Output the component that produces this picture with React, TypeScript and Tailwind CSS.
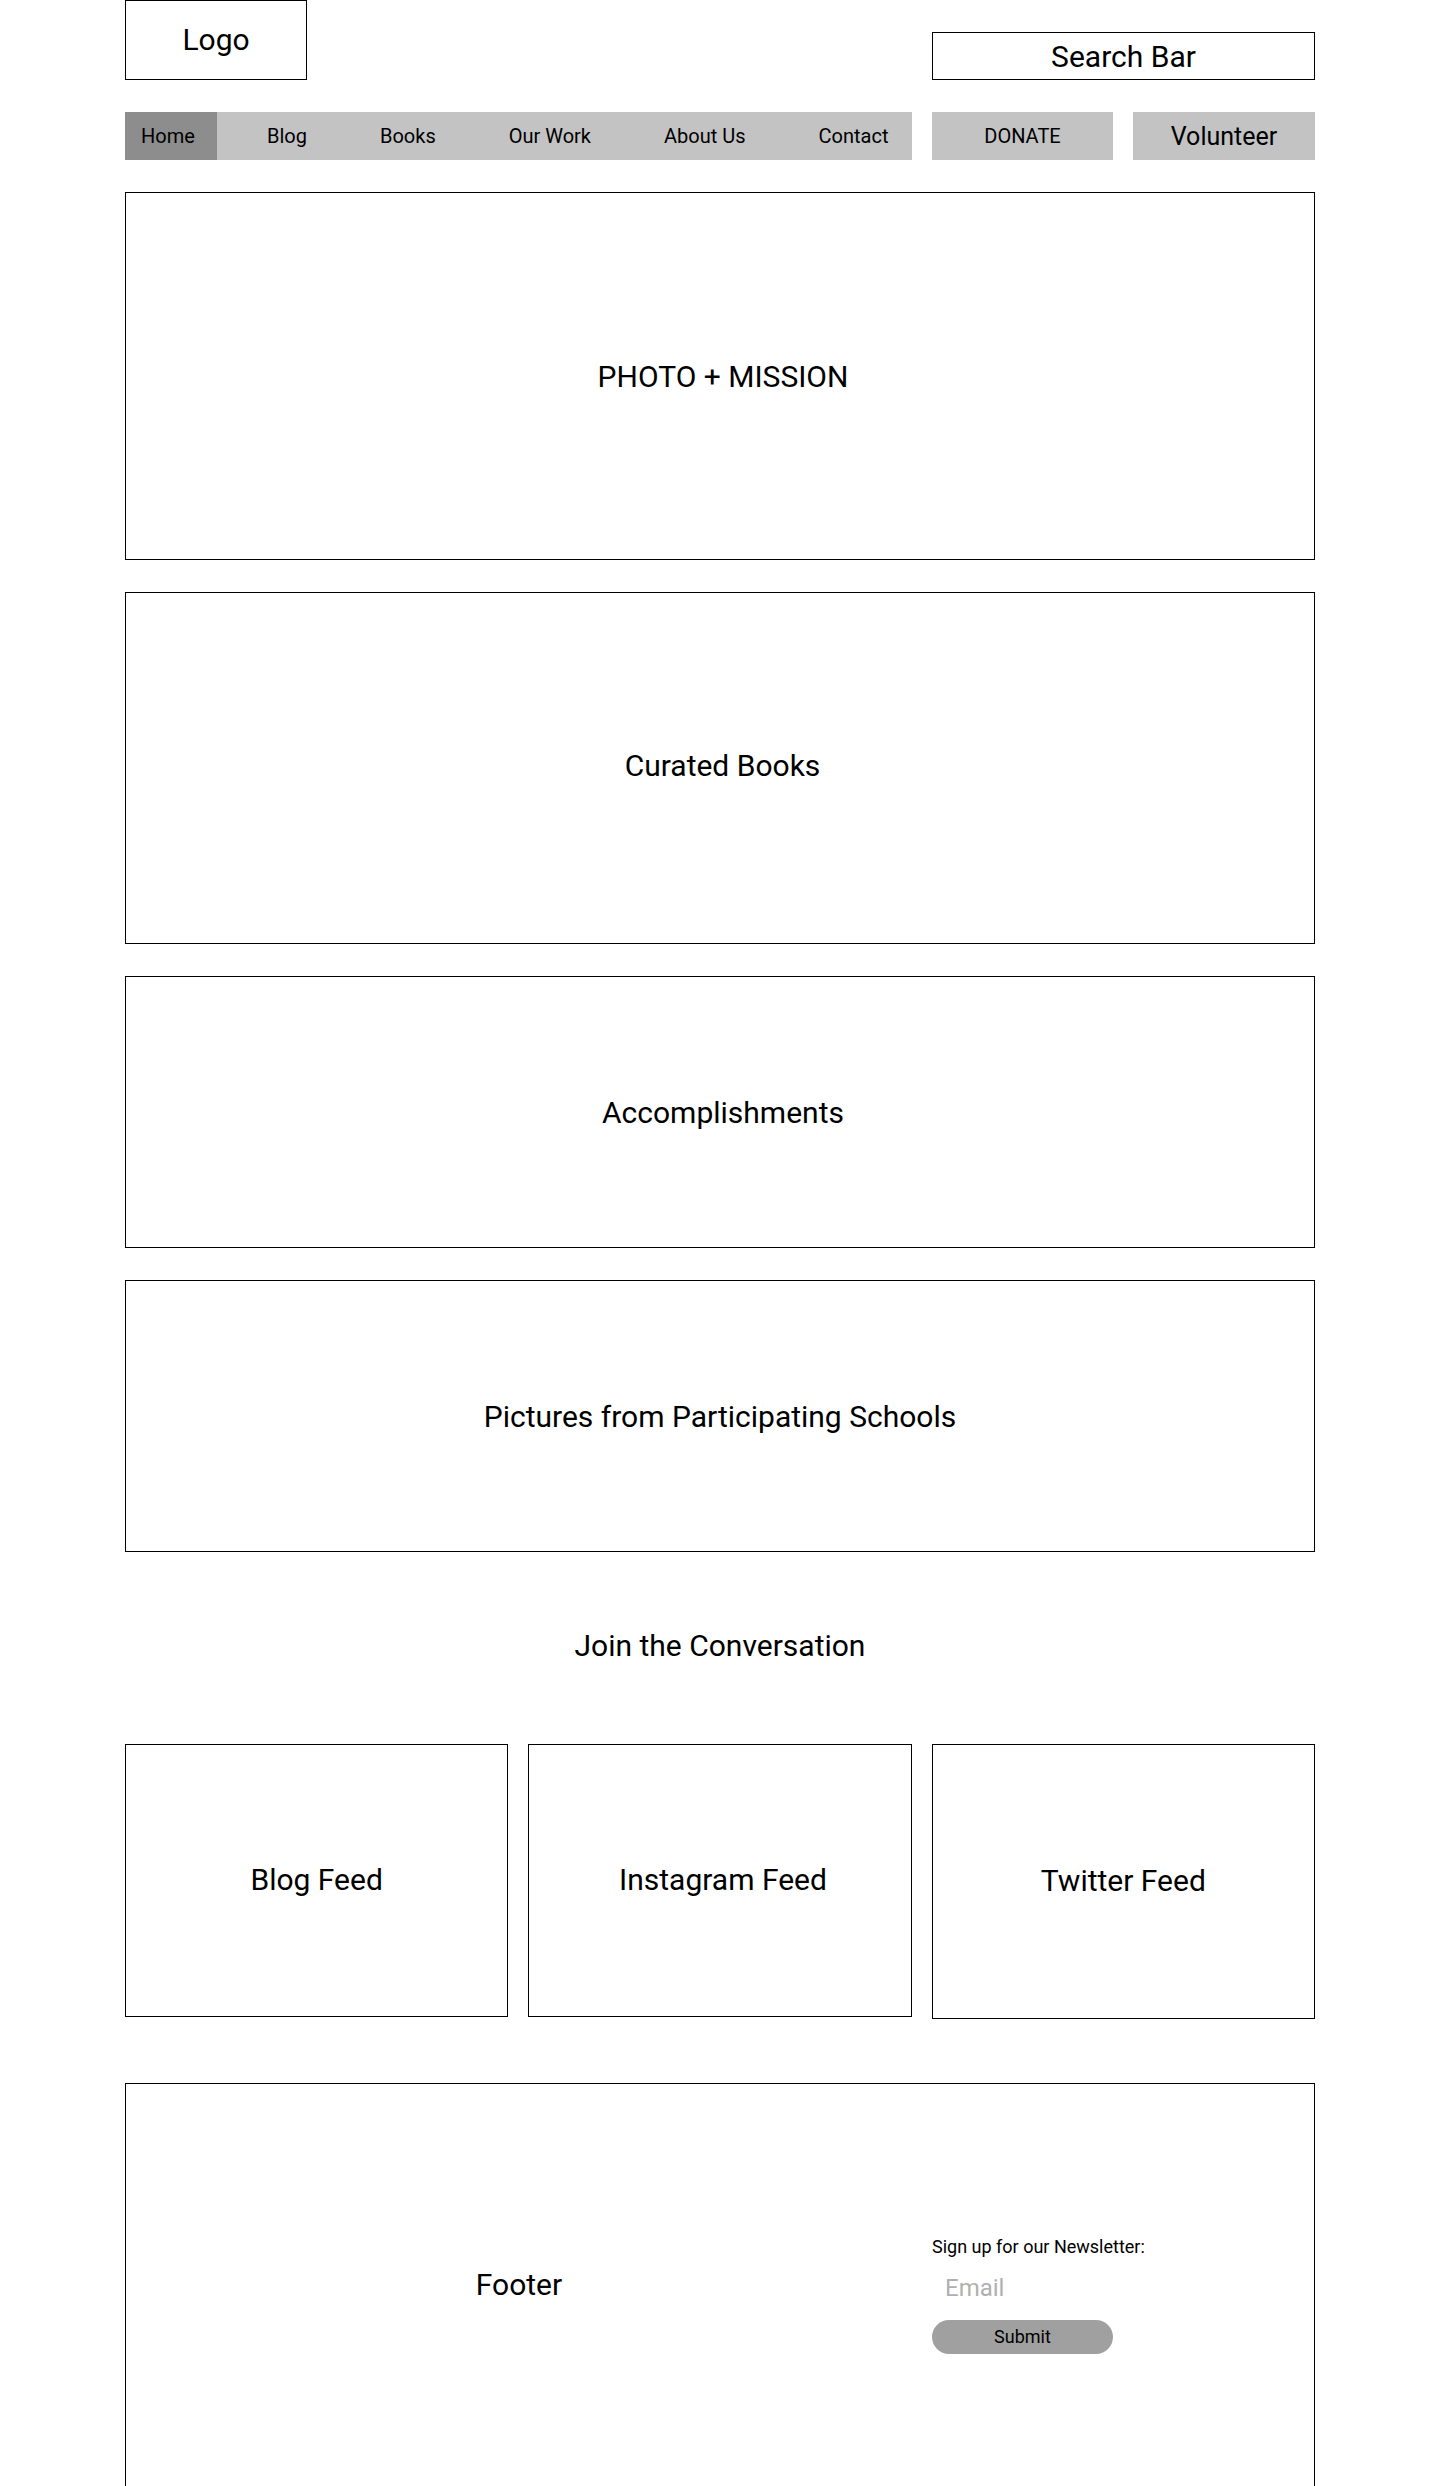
import React from "react";

function Box({ h, label, extra = "" }: { h: string; label: string; extra?: string }) {
  return (
    <div className={`${h} border border-black flex items-center justify-center text-[30px] leading-[35px]`}>
      <span className={extra}>{label}</span>
    </div>
  );
}

export default function App() {
  const navItems = ["Blog", "Books", "Our Work", "About Us", "Contact"];
  return (
    <div className="w-full bg-white font-[Roboto,sans-serif] text-black">
      <div className="w-[1190px] mx-auto flex flex-col">
        {/* Header */}
        <div className="flex items-end justify-between">
          <div className="w-[182px] h-[80px] border border-black flex items-center justify-center text-[30px] leading-[35px]">
            <span className="-mt-[2px]">Logo</span>
          </div>
          <div className="w-[383px] h-[48px] border border-black flex items-center justify-center text-[30px] leading-[35px]">
            Search Bar
          </div>
        </div>

        {/* Nav */}
        <div className="mt-8 flex h-[48px] gap-5">
          <div className="w-[787px] bg-[#c3c3c3] flex items-stretch text-[20px] leading-[24px]">
            <div className="w-[92px] bg-[#8d8d8d] flex items-center pl-[16px]">Home</div>
            <div className="flex items-center pl-[50px] gap-[73px]">
              {navItems.map((n) => (
                <span key={n}>{n}</span>
              ))}
            </div>
          </div>
          <div className="w-[181px] bg-[#c3c3c3] flex items-center justify-center text-[20px] leading-[24px]">
            DONATE
          </div>
          <div className="w-[182px] bg-[#c3c3c3] flex items-center justify-center text-[25px] leading-[29px]">
            Volunteer
          </div>
        </div>

        {/* Main sections */}
        <div className="mt-8 flex flex-col gap-8">
          <Box h="h-[368px]" label="PHOTO + MISSION" extra="ml-[6px]" />
          <Box h="h-[352px]" label="Curated Books" extra="ml-[5px] -mt-[5px]" />
          <Box h="h-[272px]" label="Accomplishments" extra="ml-[6px]" />
          <Box h="h-[272px]" label="Pictures from Participating Schools" />
        </div>

        {/* Join */}
        <div className="pt-[76px] pb-[81px] text-center text-[30px] leading-[35px]">
          Join the Conversation
        </div>

        {/* Feeds */}
        <div className="grid grid-cols-3 gap-5 items-start">
          <Box h="h-[273px]" label="Blog Feed" extra="-mt-[2px]" />
          <Box h="h-[273px]" label="Instagram Feed" extra="ml-[6px] -mt-[2px]" />
          <Box h="h-[275px]" label="Twitter Feed" extra="-mt-[2px]" />
        </div>

        {/* Footer */}
        <div className="mt-[64px] h-[405px] border border-black grid grid-cols-[786px_1fr] gap-5">
          <div className="flex items-center justify-center text-[30px] leading-[35px]">
            <span className="-mt-[2px]">Footer</span>
          </div>
          <div className="flex flex-col items-start pt-[152px]">
            <div className="text-[18px] leading-[21px]">Sign up for our Newsletter:</div>
            <div className="mt-[17px] pl-[13px] text-[24px] leading-[28px] text-[#b0b0b0]">Email</div>
            <div className="mt-[18px] w-[181px] h-[34px] rounded-full bg-[#a0a0a0] flex items-center justify-center text-[18px] leading-[22px]">
              Submit
            </div>
          </div>
        </div>
      </div>
    </div>
  );
}
